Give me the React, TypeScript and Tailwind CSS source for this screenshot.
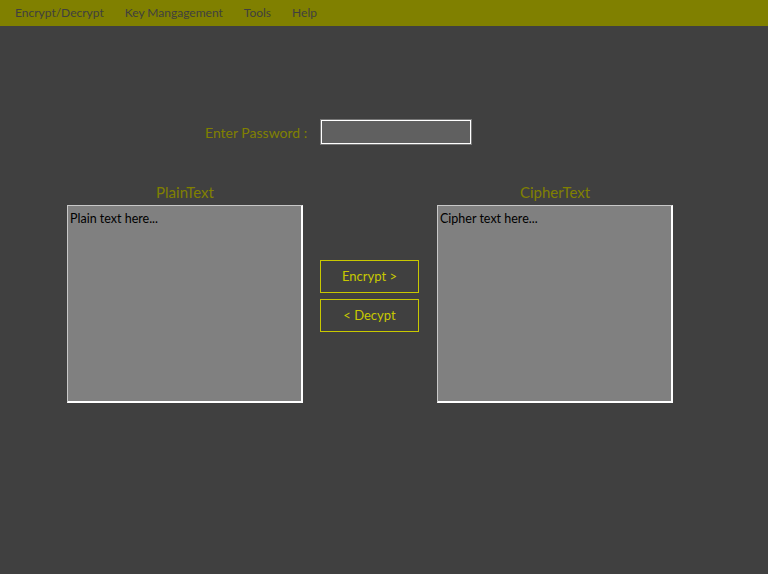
import React from "react";

const menuItems = ["Encrypt/Decrypt", "Key Mangagement", "Tools", "Help"];

const TextPanel = ({ title, text }: { title: string; text: string }) => {
  return (
    <div className="flex flex-col items-center">
      <h2 className="h-[22px] text-[15px] leading-[18px] text-[#808000]">{title}</h2>
      <textarea
        defaultValue={text}
        spellCheck={false}
        className="w-[236px] h-[198px] resize-none bg-[#808080] border-t border-l border-t-[#c8c8c8] border-l-[#c8c8c8] border-r-2 border-b-2 border-r-white border-b-white px-[2px] pt-[5px] text-[12.5px] leading-[16px] text-black outline-none"
      />
    </div>
  );
};

const App = () => {
  return (
    <div className="w-[768px] h-[574px] bg-[#404040] font-['Lato','Open_Sans',sans-serif] overflow-hidden">
      <nav className="h-[26px] bg-[#808000] flex items-center pl-[15px] gap-[21px]">
        {menuItems.map((item) => (
          <span key={item} className="text-[12px] text-[#3f3f3f]">
            {item}
          </span>
        ))}
      </nav>

      <div className="px-[67px]">
        <div className="flex items-center mt-[94px] ml-[138px] gap-[14px]">
          <label className="text-[14px] text-[#808000]">Enter Password :</label>
          <input
            type="password"
            className="w-[150px] h-[24px] bg-[#606060] border border-white shadow-[0_0_0_1px_#767676] outline-none"
          />
        </div>

        <div className="flex mt-[39px]">
          <TextPanel title="PlainText" text="Plain text here..." />

          <div className="flex flex-col gap-[6px] pt-[77px] ml-[17px] mr-[18px]">
            <button className="w-[99px] h-[33px] border border-[#c8c800] pt-[1px] text-[13px] text-[#c8c800]">
              Encrypt &gt;
            </button>
            <button className="w-[99px] h-[33px] border border-[#c8c800] pt-[1px] text-[13px] text-[#c8c800]">
              &lt; Decypt
            </button>
          </div>

          <TextPanel title="CipherText" text="Cipher text here..." />
        </div>
      </div>
    </div>
  );
};

export default App;
